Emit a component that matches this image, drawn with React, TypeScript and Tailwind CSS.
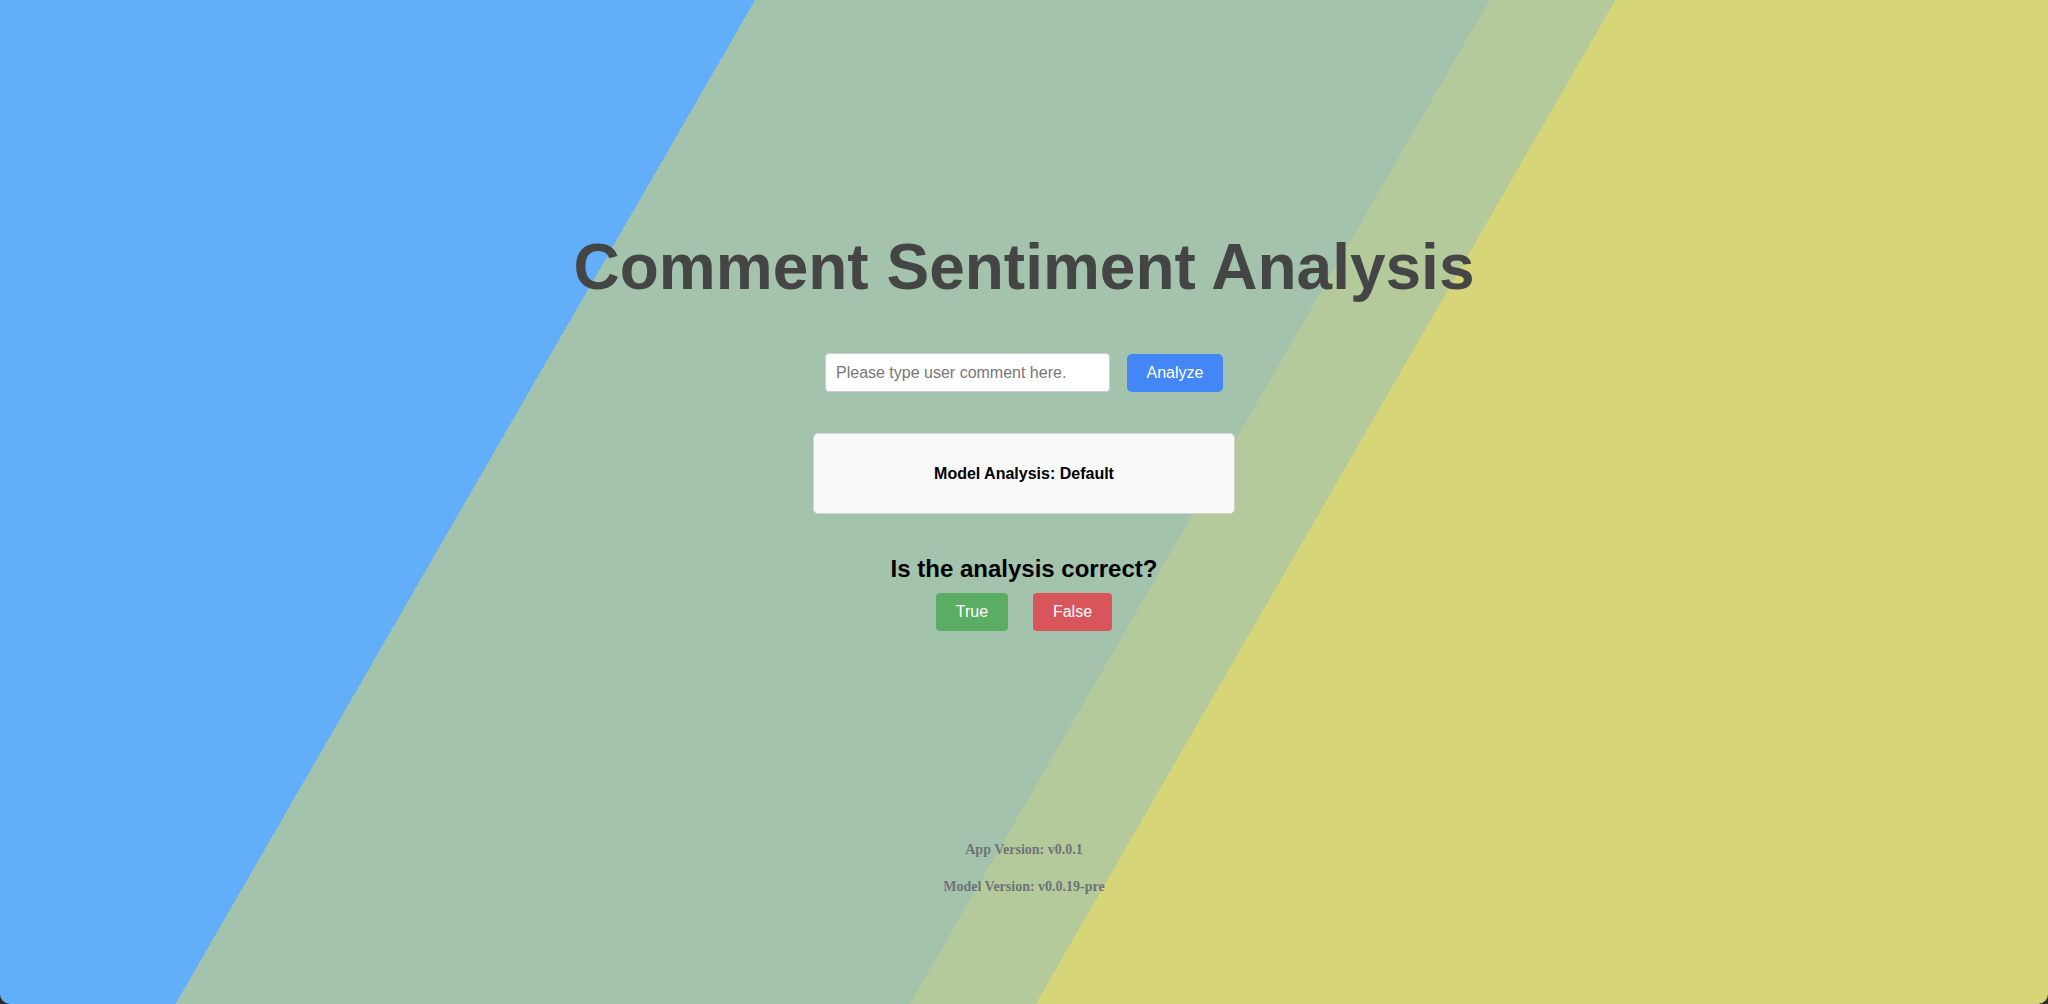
import { useState } from 'react';

// Hard-stop bands behind the page, measured along a 120deg gradient line
const bandBackground =
  'bg-[linear-gradient(120deg,#62aef8_654px,#a3c3ad_654px,#a3c3ad_1290px,#b5ca9b_1290px,#b5ca9b_1399px,#d6d578_1399px)]';

export default function App() {
  const [comment, setComment] = useState('');
  const [result] = useState('Default');

  return (
    <div className="h-screen w-full bg-[#2b2b2b]">
      <div
        className={`h-full w-full overflow-hidden rounded-b-[10px] ${bandBackground} flex flex-col items-center font-['Liberation_Sans',Arial,sans-serif]`}
      >
        <h1 className="mt-[235px] text-[64px] leading-[64px] font-bold text-[#454545]">
          Comment Sentiment Analysis
        </h1>

        <div className="mt-[54px] flex items-center gap-[17px]">
          <input
            type="text"
            value={comment}
            onChange={e => setComment(e.target.value)}
            placeholder="Please type user comment here."
            className="h-[39px] w-[285px] rounded-[4px] border border-[#cfcfcf] bg-white px-[10px] text-[16px] text-black outline-none placeholder:text-[#777]"
          />
          <button className="h-[38px] w-[96px] rounded-[5px] bg-[#4287f5] text-[16px] text-white">
            Analyze
          </button>
        </div>

        <div className="mt-[41px] flex h-[81px] w-[422px] items-center justify-center rounded-[5px] border border-[#d4d4d4] bg-[#f9f9f9]">
          <p className="text-[16px] font-bold text-black">Model Analysis: {result}</p>
        </div>

        <h2 className="mt-[43px] text-[24px] leading-[24px] font-bold text-black">
          Is the analysis correct?
        </h2>
        <div className="mt-[12px] flex gap-[25px]">
          <button className="h-[38px] w-[72px] rounded-[4px] bg-[#5bad63] text-[16px] text-white">True</button>
          <button className="h-[38px] w-[79px] rounded-[4px] bg-[#d8555b] text-[16px] text-white">False</button>
        </div>

        <div className="mt-[212px] flex flex-col items-center gap-[23px] font-['Liberation_Serif','Times_New_Roman',serif] text-[14px] leading-[14px] font-bold text-[#6e7378]">
          <p>App Version: v0.0.1</p>
          <p>Model Version: v0.0.19-pre</p>
        </div>
      </div>
    </div>
  );
}
